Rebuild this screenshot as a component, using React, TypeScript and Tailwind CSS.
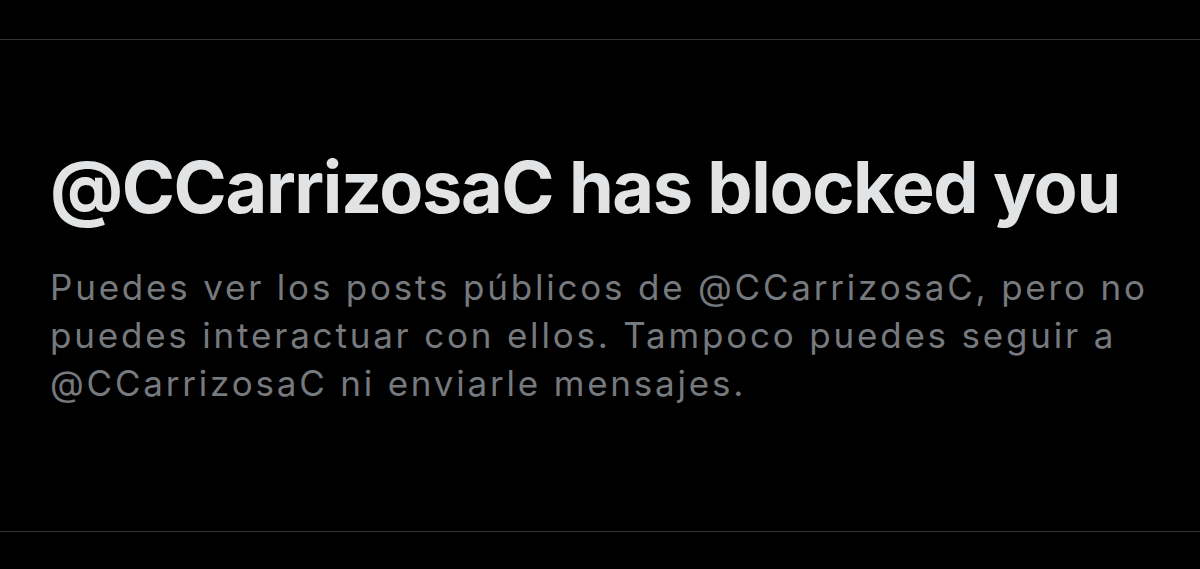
export default function App() {
  return (
    <div className="flex h-[569px] w-[1200px] flex-col bg-black" style={{ fontFamily: "Inter, 'Liberation Sans', sans-serif" }}>
      <div className="h-[39px]" />
      <div className="h-px bg-[#2f3336]" />
      <div className="flex flex-1 flex-col pl-[50px] pr-[30px] pt-[107px]">
        <h1 className="text-[72px] font-bold leading-[80px] tracking-[-1.4px] whitespace-nowrap text-[#e1e3e4]">
          @CCarrizosaC has blocked you
        </h1>
        <p className="mt-[36px] text-[35px] leading-[48px] tracking-[2.8px] text-[#76797d]">
          Puedes ver los posts públicos de @CCarrizosaC, pero no puedes interactuar con ellos. Tampoco puedes seguir a @CCarrizosaC ni enviarle mensajes.
        </p>
      </div>
      <div className="h-px bg-[#2f3336]" />
      <div className="h-[37px]" />
    </div>
  );
}
